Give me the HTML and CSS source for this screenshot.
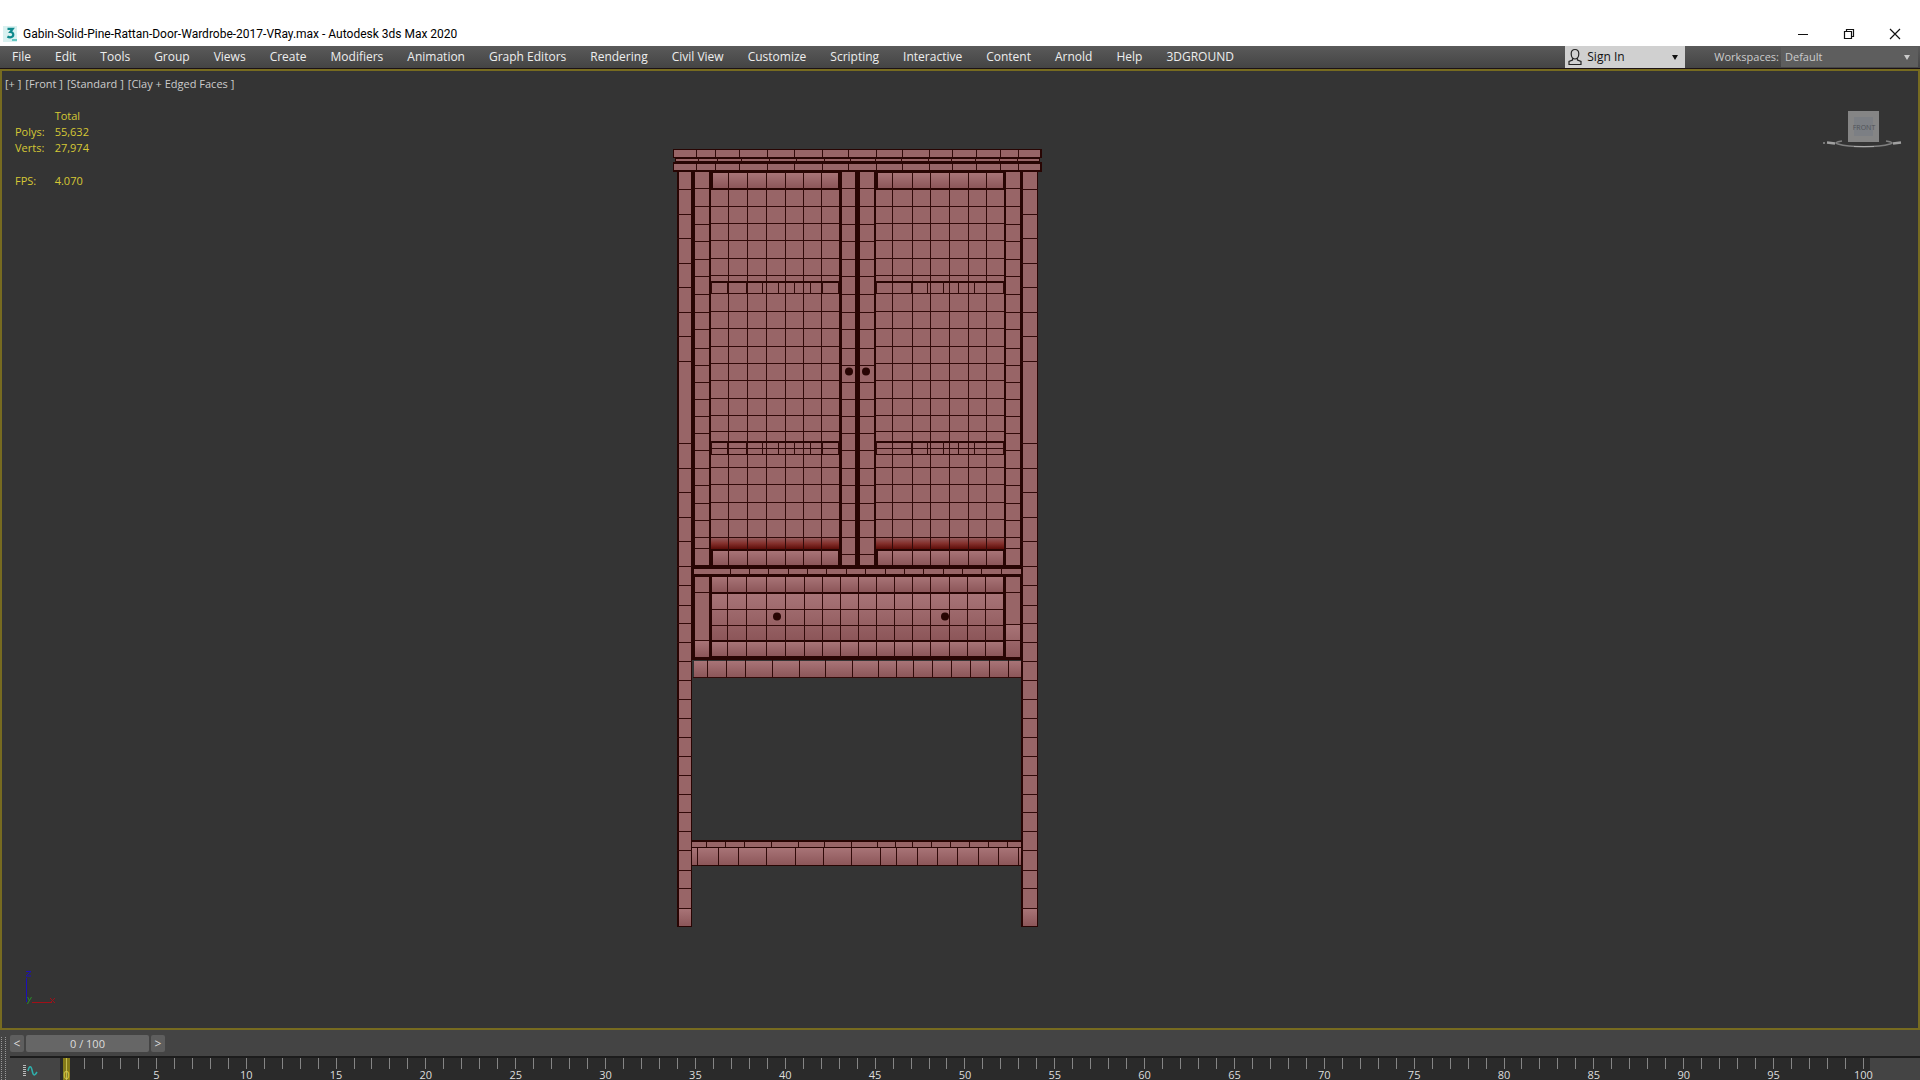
FILE: index.html
```html
<!DOCTYPE html>
<html lang="en">
<head>
    <meta charset="UTF-8">
    <meta name="viewport" content="width=device-width, initial-scale=1.0">
    <title>Gabin-Solid-Pine-Rattan-Door-Wardrobe-2017-VRay.max - Autodesk 3ds Max 2020</title>
    <link rel="stylesheet" href="styles.css">
</head>
<body>

<header class="titlebar">
    <svg class="app-icon" width="16" height="16" viewBox="0 0 16 16" aria-hidden="true">
        <rect width="14" height="16" fill="#d9f1f0"/>
        <path d="M4.500 2.800h5.200L7.300 6c2 0 3 1.100 3 2.600 0 1.700-1.300 2.700-3.100 2.700-1.100 0-2-.3-2.800-.8" fill="none" stroke="#0f8a8d" stroke-width="2.200"/>
        <path d="M9 14h5" stroke="#3cb9b4" stroke-width="1.500"/>
    </svg>
    <h1>Gabin-Solid-Pine-Rattan-Door-Wardrobe-2017-VRay.max - Autodesk 3ds Max 2020</h1>
    <div class="window-buttons">
        <button type="button" aria-label="Minimize">
            <svg width="12" height="12" viewBox="0 0 12 12"><path d="M1 6.500h10" stroke="#111"/></svg>
        </button>
        <button type="button" aria-label="Restore">
            <svg width="12" height="12" viewBox="0 0 12 12"><path d="M1.500 3.500h7v7h-7zM3.500 3.500v-2h7v7h-2" fill="none" stroke="#111" stroke-width="1.200"/></svg>
        </button>
        <button type="button" aria-label="Close">
            <svg width="12" height="12" viewBox="0 0 12 12"><path d="M1 1l10 10M11 1L1 11" stroke="#111" stroke-width="1.200"/></svg>
        </button>
    </div>
</header>

<div class="menubar">
    <nav class="menu">
        <button type="button">File</button>
        <button type="button">Edit</button>
        <button type="button">Tools</button>
        <button type="button">Group</button>
        <button type="button">Views</button>
        <button type="button">Create</button>
        <button type="button">Modifiers</button>
        <button type="button">Animation</button>
        <button type="button">Graph Editors</button>
        <button type="button">Rendering</button>
        <button type="button">Civil View</button>
        <button type="button">Customize</button>
        <button type="button">Scripting</button>
        <button type="button">Interactive</button>
        <button type="button">Content</button>
        <button type="button">Arnold</button>
        <button type="button">Help</button>
        <button type="button">3DGROUND</button>
    </nav>
    <button type="button" class="sign-in">
        <svg width="14" height="18" viewBox="0 0 14 18" aria-hidden="true">
            <path d="M7 1.500c2.400 0 3.800 1.800 3.800 4.300S9.400 11 7 11 3.200 8.300 3.200 5.800 4.600 1.500 7 1.500zM4.500 10.500v1.500L1 13.500v3h12v-3L9.500 12v-1.500" fill="none" stroke="#222" stroke-width="1.200"/>
        </svg>
        <span>Sign In</span>
        <i class="arrow"></i>
    </button>
    <div class="workspaces">
        <label for="workspace">Workspaces:</label>
        <div class="select-box">
            <select id="workspace">
                <option>Default</option>
            </select>
            <i class="arrow"></i>
        </div>
    </div>
</div>

<main class="viewport">
    <div class="view-labels">
        <button type="button">[+ ]</button>
        <button type="button">[Front ]</button>
        <button type="button">[Standard ]</button>
        <button type="button">[Clay + Edged Faces ]</button>
    </div>
    <table class="stats">
        <tr><td></td><th scope="col">Total</th></tr>
        <tr><th scope="row">Polys:</th><td>55,632</td></tr>
        <tr><th scope="row">Verts:</th><td>27,974</td></tr>
        <tr class="fps"><th scope="row">FPS:</th><td>4.070</td></tr>
    </table>

    <svg class="wardrobe" id="wardrobe" width="372" height="780" viewBox="672 148 372 780" role="img" aria-label="Wardrobe, front view">
        <defs>
            <linearGradient id="rail" x1="0" y1="0" x2="0" y2="1">
                <stop offset="0" stop-color="#a87477"/>
                <stop offset="1" stop-color="#8c5659"/>
            </linearGradient>
            <linearGradient id="rod" x1="0" y1="0" x2="0" y2="1">
                <stop offset="0" stop-color="#94595b"/>
                <stop offset="0.500" stop-color="#84302c"/>
                <stop offset="1" stop-color="#5c0c08"/>
            </linearGradient>
        </defs>
    </svg>

    <svg class="view-cube" width="82" height="42" viewBox="0 0 82 42" role="img" aria-label="View cube">
        <path d="M1 33h2" stroke="#777" stroke-width="2"/>
        <path d="M5 32.500l8 1M79 32.500l-8 1" stroke="#a0a0a0" stroke-width="2.500"/>
        <path d="M20 31c-6 1-8 2-4 3 12 3.500 40 3.500 52 0 4-1 2-2-4-3" fill="none" stroke="#808080" stroke-width="1.500"/>
        <path d="M32 36.500h20" stroke="#aaa"/>
        <rect x="26" y="1" width="31" height="31" fill="#858585"/>
        <rect x="32" y="7" width="19" height="19" fill="#7c7f84"/>
        <text x="42" y="20" text-anchor="middle">FRONT</text>
    </svg>

    <svg class="axis" width="44" height="36" viewBox="0 0 44 36" aria-hidden="true">
        <path d="M11.500 8v24" stroke="#1c10b8"/>
        <path d="M11 1.500h5l-5 4.500h5" fill="none" stroke="#1c10b8"/>
        <path d="M17 32.500h20" stroke="#a01018"/>
        <path d="M35 28l5 5M40 28l-5 5" stroke="#a01018"/>
        <path d="M12.500 27l2 3.500 2-3.500M14.500 30l-2 4" fill="none" stroke="#2a8a2c"/>
    </svg>
</main>

<footer class="timeline">
    <div class="grip"></div>
    <div class="timeline-body">
        <div class="slider">
            <button type="button" aria-label="Previous frame">&lt;</button>
            <button type="button" class="frame">0 / 100</button>
            <button type="button" aria-label="Next frame">&gt;</button>
        </div>
        <div class="track">
            <button type="button" class="curve" aria-label="Open mini curve editor">
                <svg width="16" height="14" viewBox="0 0 16 14">
                    <path d="M2.500 1v12" stroke="#bbb" stroke-width="3" stroke-dasharray="1 1"/>
                    <path d="M6 7c1-5 3-6 4-1s2 7 5 2" fill="none" stroke="#2fb0ac" stroke-width="1.500"/>
                </svg>
            </button>
            <div class="ruler" id="ruler"></div>
        </div>
    </div>
</footer>

<script src="script.js"></script>
</body>
</html>
```
FILE: styles.css
```css
* {
    box-sizing: border-box;
}
body {
    margin: 0;
    height: 100vh;
    display: flex;
    flex-direction: column;
    overflow: hidden;
    background: #444;
    font-family: "Open Sans", "Noto Sans", sans-serif;
    font-size: 12px;
    line-height: 16px;
}
button, select {
    margin: 0;
    padding: 0;
    border: none;
    border-radius: 0;
    background: none;
    color: inherit;
    font: inherit;
    white-space: nowrap;
}
svg {
    display: block;
}

/* title bar */
.titlebar {
    display: flex;
    align-items: center;
    padding: 21px 19px 0 3px;
    height: 46px;
    background: #fff;
    color: #000;
}
.titlebar h1 {
    margin: 0 auto 0 4px;
    font-family: Roboto, "Open Sans", sans-serif;
    font-size: 12px;
    font-weight: normal;
}
.window-buttons {
    display: flex;
    gap: 34px;
}

/* menu bar */
.menubar {
    display: flex;
    align-items: stretch;
    height: 23px;
    border-bottom: 1px solid #1c1214;
    background: linear-gradient(#5a5a5a, #444);
    color: #eee;
}
.menu {
    display: flex;
    gap: 24px;
    padding-left: 12px;
}
.sign-in {
    display: flex;
    align-items: center;
    width: 120px;
    margin-left: auto;
    padding: 0 7px 0 3px;
    gap: 5px;
    background: #d0d0d0;
    color: #111;
}
.arrow {
    width: 0;
    border: 3px solid transparent;
    border-top: 5px solid;
    border-bottom: none;
}
.sign-in .arrow {
    margin-left: auto;
}
.workspaces {
    display: flex;
    align-items: center;
    gap: 2px;
    padding: 1px 2px 1px 29px;
    font-size: 11px;
    color: #ccc;
}
.select-box {
    display: flex;
    align-items: center;
    align-self: stretch;
    width: 137px;
    padding-right: 8px;
    background: #5e5e5e;
}
.select-box select {
    flex: 1;
    padding-left: 4px;
    appearance: none;
}

/* viewport */
.viewport {
    flex: 1;
    position: relative;
    border: 2px solid #776b20;
    background: #343434;
}
.view-labels {
    display: flex;
    gap: 4px;
    padding: 5px 3px;
    font-size: 11px;
    color: #ccc;
}
.stats {
    margin: 11px 13px;
    border-collapse: collapse;
    font-size: 11px;
    color: #d6c834;
}
.stats th, .stats td {
    padding: 0 10px 0 0;
    font-weight: normal;
    text-align: left;
}
.stats .fps th, .stats .fps td {
    padding-top: 17px;
}
.wardrobe {
    position: absolute;
    left: 670px;
    top: 77px;
    shape-rendering: crispEdges;
}
.wardrobe circle {
    shape-rendering: auto;
}
.wood {
    fill: #986567;
}
.shaded {
    fill: url(#rail);
}
.rod {
    fill: url(#rod);
}
.dark {
    fill: #280503;
}
.edge {
    fill: none;
    stroke: #310a09;
}
.view-cube {
    position: absolute;
    right: 14px;
    top: 39px;
}
.view-cube text {
    font-size: 7px;
    fill: #505358;
}
.axis {
    position: absolute;
    left: 13px;
    bottom: 22px;
}

/* time slider */
.timeline {
    display: flex;
    height: 50px;
    gap: 4px;
    background: #444;
    color: #ddd;
}
.grip {
    width: 5px;
    margin: 7px 0 0 1px;
    border-left: 1px dotted #999;
    border-right: 1px dotted #999;
}
.grip, .slider, .curve {
    flex-shrink: 0;
}
.timeline-body {
    flex: 1;
}
.slider {
    display: flex;
    gap: 2px;
    height: 26px;
    padding: 5px 0 4px;
}
.slider button {
    width: 14px;
    border-radius: 2px;
    background: #5e5e5e;
}
.slider .frame {
    width: 123px;
    background: #666;
    font-size: 11px;
}
.track {
    display: flex;
    height: 24px;
    border-top: 2px solid #1c1c1c;
}
.curve {
    width: 50px;
    padding: 3px 0 0 12px;
}
.ruler {
    flex: 1;
    display: flex;
    justify-content: space-between;
    margin-right: 50px;
    padding: 0 6px;
    background: #2a2a2a;
}
.tick {
    display: flex;
    flex-direction: column;
    align-items: center;
    width: 1px;
    height: 22px;
}
.tick::before {
    content: "";
    flex-shrink: 0;
    width: 1px;
    height: 11px;
    background: #858585;
}
.tick span {
    font-size: 11px;
    line-height: 11px;
}
.tick.current::before {
    width: 7px;
    height: 22px;
    background: linear-gradient(90deg, #857b18 3px, #c4bb50 3px, #c4bb50 4px, #857b18 4px);
}
.tick.current span {
    margin-top: -11px;
    color: #d8cc50;
}
```
FILE: script.js
```javascript
var svg = document.getElementById('wardrobe');

function add(tag, cls, attrs) {
    var el = document.createElementNS('http://www.w3.org/2000/svg', tag);
    el.setAttribute('class', cls);
    for (var key in attrs) {
        el.setAttribute(key, attrs[key]);
    }
    svg.appendChild(el);
}

// filled box from x1,y1 to x2,y2
function box(cls, x1, y1, x2, y2) {
    add('rect', cls, { x: x1, y: y1, width: x2 - x1, height: y2 - y1 });
}

// vertical edges at every x
function cols(xs, y1, y2) {
    add('path', 'edge', { d: xs.map(function (x) { return 'M' + (x + 0.5) + ' ' + y1 + 'V' + y2; }).join('') });
}

// horizontal edges at every y
function rows(ys, x1, x2) {
    add('path', 'edge', { d: ys.map(function (y) { return 'M' + x1 + ' ' + (y + 0.5) + 'H' + x2; }).join('') });
}

// top boards
var topCols = [696, 715, 739, 767, 794, 822, 848, 876, 902, 929, 952, 976, 1000, 1018];
box('dark', 673, 149, 1042, 158);
box('dark', 675, 158, 1040, 162);
box('dark', 673, 162, 1042, 172);
box('wood', 674, 150, 1040, 157);
box('wood', 676, 159, 1039, 161);
box('wood', 674, 164, 1040, 170);
cols(topCols, 150, 157);
cols(topCols.map(function (x) { return x < 860 ? x + 2 : x - 1; }), 158, 162);
cols(topCols, 164, 170);

// body behind the doors
box('dark', 692, 171, 1022, 660);

// legs
var legRows = [189, 214, 238, 263, 287, 312, 336, 361, 443, 468, 492, 517, 541, 566, 585, 605, 623,
    642, 661, 680, 699, 718, 737, 756, 775, 794, 812, 831, 850, 870, 888, 908];
[[677, 692], [1021, 1038]].forEach(function (leg) {
    box('dark', leg[0], 171, leg[1], 927);
    box('wood', leg[0] + 2, 172, leg[1] - 1, 926);
    box('shaded', leg[0] + 2, 909, leg[1] - 1, 926);
    rows(legRows, leg[0], leg[1]);
});

// door stiles
var stileRows = [188, 206, 224, 241, 259, 276, 294, 312, 329, 348, 365, 382, 399, 416, 433, 450, 468, 485, 503, 520];
[[695, 709, 548], [842, 855, 554], [860, 874, 554], [1006, 1020, 548]].forEach(function (s) {
    box('wood', s[0], 172, s[1], 565);
    rows(stileRows.concat([537, s[2]]), s[0], s[1]);
});

// door panels with shelves behind
var panelRows = [206, 223, 240, 258, 275, 293, 311, 328, 346, 363, 380, 398, 415, 431, 467, 484, 502, 519, 537];
var panels = [
    { x1: 711, x2: 839, cols: [728, 747, 766, 785, 803, 821], shelf: [727, 746, 762, 778, 794, 810, 822] },
    { x1: 876, x2: 1004, cols: [892, 912, 930, 949, 968, 986], shelf: [911, 927, 943, 958, 974] }
];
panels.forEach(function (p) {
    box('wood', p.x1, 190, p.x2, 549);
    box('shaded', p.x1 + 2, 173, p.x2 - 1, 188);
    box('rod', p.x1, 538, p.x2, 549);
    box('shaded', p.x1 + 2, 551, p.x2 - 1, 565);
    rows(panelRows, p.x1, p.x2);
    cols(p.cols, 172, 565);
    box('dark', p.x1, 281, p.x2, 283);
    box('dark', p.x1, 441, p.x2, 443);
    box('dark', p.x1, 454, p.x2, 455);
    rows([448], p.x1, p.x2);
    cols([p.x1, p.x2 - 1].concat(p.shelf), 281, 294);
    cols([p.x1, p.x2 - 1].concat(p.shelf), 441, 455);
});

// rail between doors and drawer
box('wood', 694, 569, 1021, 574);
cols([730, 749, 768, 788, 807, 826, 846, 865, 885, 904, 923, 943, 962, 981, 1001], 568, 575);

// drawer
box('wood', 695, 577, 709, 657);
box('wood', 1006, 577, 1020, 657);
box('shaded', 695, 641, 709, 657);
box('shaded', 1006, 625, 1020, 657);
box('shaded', 712, 577, 1003, 592);
box('shaded', 712, 594, 1003, 640);
box('shaded', 712, 642, 1003, 656);
rows([592, 640], 695, 709);
rows([592, 624, 640], 1006, 1020);
rows([609, 625], 712, 1003);
cols([727, 746, 766, 785, 804, 822, 840, 858, 876, 894, 912, 930, 949, 967, 985], 577, 657);

// apron
box('shaded', 694, 661, 1021, 677);
rows([677], 693, 1021);
cols([707, 726, 745, 772, 799, 825, 852, 878, 896, 913, 932, 951, 970, 989, 1008], 660, 677);

// lower stretcher
box('dark', 692, 840, 1021, 866);
box('wood', 692, 842, 1021, 847);
box('shaded', 692, 848, 1021, 865);
cols([706, 725, 744, 771, 798, 824, 851, 877, 895, 912, 931, 950, 969, 988, 1007], 842, 847);
cols([697, 718, 738, 766, 795, 823, 851, 880, 896, 917, 937, 957, 978, 998, 1018], 848, 865);

// knobs
[[849, 371], [866, 371], [777, 616], [945, 616]].forEach(function (k) {
    add('circle', 'dark', { cx: k[0], cy: k[1] + 0.5, r: 4 });
});

// frame ruler, a number on every fifth tick
var ruler = document.getElementById('ruler');
for (var i = 0; i <= 100; i++) {
    var tick = document.createElement('div');
    tick.className = i === 0 ? 'tick current' : 'tick';
    if (i % 5 === 0) {
        var num = document.createElement('span');
        num.textContent = i;
        tick.appendChild(num);
    }
    ruler.appendChild(tick);
}
```
